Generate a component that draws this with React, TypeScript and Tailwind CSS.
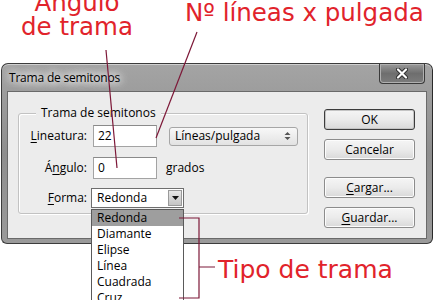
import type { ReactNode } from 'react'

const listItems = ['Redonda', 'Diamante', 'Elipse', 'Línea', 'Cuadrada', 'Cruz']

function DlgButton({ children, primary }: { children: ReactNode; primary?: boolean }) {
  return (
    <div
      className={`flex h-[21px] w-[91px] items-center justify-center rounded-[3px] border bg-linear-to-b from-[#f5f5f5] via-[#ebebeb] to-[#d9d9d9] text-[12px] text-black ${
        primary ? 'border-[#3c3c3c] shadow-[inset_0_0_0_1px_#c4c4c4]' : 'border-[#8c8c8c] shadow-[inset_0_0_0_1px_#fcfcfc]'
      }`}
    >
      {children}
    </div>
  )
}

function CloseButton() {
  return (
    <div className="mr-[7px] ml-auto flex h-[20px] w-[46px] items-center justify-center self-start rounded-b-[4px] border border-t-0 border-[#3a3a3a] bg-linear-to-b from-[#9a9a9a] via-[#6e6e6e] to-[#7c7c7c] shadow-[inset_0_0_0_1px_#b0b0b0]">
      <svg width="14" height="11" viewBox="0 0 14 11">
        <path d="M3 1.5 L11 9.5 M11 1.5 L3 9.5" stroke="#2e2e2e" strokeWidth="4" strokeLinecap="round" />
        <path d="M3 1.5 L11 9.5 M11 1.5 L3 9.5" stroke="#ffffff" strokeWidth="2.2" strokeLinecap="round" />
      </svg>
    </div>
  )
}

export default function App() {
  return (
    <div className="relative h-[300px] w-[434px] overflow-hidden bg-white pt-[63px] pl-[1px] font-['Open_Sans',sans-serif]">
      {/* dialog window */}
      <div className="flex h-[181px] w-[432px] flex-col rounded-t-[7px] rounded-b-[6px] border border-[#3c3c3c] border-r-[#2a2a2a] bg-linear-to-b from-[#a4a4a4] via-[#8e8e8e] to-[#9a9a9a] shadow-[inset_0_1px_0_#d0d0d0]">
        <div className="flex h-[27px] items-center pl-[7px]">
          <span className="text-[12px] tracking-[-0.2px] text-black [text-shadow:0_0_8px_#fff,0_0_8px_#fff,0_0_12px_#fff]">
            Trama de semitonos
          </span>
          <CloseButton />
        </div>

        <div className="px-[5px]">
          {/* client area */}
          <div className="flex h-[148px] items-start border border-[#6a6a6a] bg-[#ececec] pl-[10px] text-[12px] text-black">
            {/* group box */}
            <div className="relative mt-[21px] h-[101px] w-[290px] rounded-[3px] border border-[#c2c2c2] shadow-[inset_1px_1px_0_#fff,1px_1px_0_#fff]">
              <span className="absolute top-[-10px] left-[17px] bg-[#ececec] px-[5px] leading-[18px]">Trama de semitonos</span>

              <div className="flex flex-col pt-[11px]">
                <div className="flex h-[22px] items-center">
                  <span className="w-[68px] text-right">
                    <span className="underline underline-offset-2">L</span>ineatura:
                  </span>
                  <div className="ml-[6px] flex h-[22px] w-[64px] items-center border border-[#a3a3a3] border-t-[#8a8a8a] bg-white pl-[4px]">22</div>
                  <div className="ml-[12px] flex h-[19px] w-[129px] items-center justify-between rounded-[3px] border border-[#a6a6a6] bg-linear-to-b from-[#f8f8f8] to-[#e2e2e2] pr-[6px] pl-[5px]">
                    <span>Líneas/pulgada</span>
                    <svg width="7" height="10" viewBox="0 0 7 10">
                      <path d="M0.5 4 L3.5 1 L6.5 4 Z M0.5 6 L3.5 9 L6.5 6 Z" fill="#555" />
                    </svg>
                  </div>
                </div>

                <div className="mt-[10px] flex h-[22px] items-center">
                  <span className="w-[68px] text-right">
                    Á<span className="underline underline-offset-2">n</span>gulo:
                  </span>
                  <div className="ml-[6px] flex h-[22px] w-[64px] items-center border border-[#a3a3a3] border-t-[#8a8a8a] bg-white pl-[4px]">0</div>
                  <span className="ml-[9px]">grados</span>
                </div>

                <div className="mt-[9px] flex h-[20px] items-center">
                  <span className="w-[68px] text-right">
                    <span className="underline underline-offset-2">F</span>orma:
                  </span>
                  <div className="relative ml-[4px] flex h-[20px] w-[93px] items-center border border-[#6e6e6e] bg-white pl-[5px]">
                    <span>Redonda</span>
                    <div className="absolute top-[1px] right-[1px] flex h-[16px] w-[14px] items-center justify-center border border-[#9a9a9a] bg-linear-to-b from-[#e6e6e6] to-[#c4c4c4]">
                      <svg width="7" height="4" viewBox="0 0 7 4">
                        <path d="M0 0 H7 L3.5 4 Z" fill="#111" />
                      </svg>
                    </div>

                    {/* open list */}
                    <div className="absolute top-[20px] left-[-1px] z-10 w-[93px] border border-[#5a5a5a] bg-white">
                      {listItems.map((item, i) => (
                        <div key={item} className={`h-[16px] pl-[5px] leading-[16px] ${i === 0 ? 'bg-[#9e9e9e]' : ''}`}>
                          {item}
                        </div>
                      ))}
                    </div>
                  </div>
                </div>
              </div>
            </div>

            {/* buttons */}
            <div className="mt-[17px] ml-[16px] flex flex-col">
              <DlgButton primary>OK</DlgButton>
              <div className="mt-[9px]">
                <DlgButton>Cancelar</DlgButton>
              </div>
              <div className="mt-[17px]">
                <DlgButton>
                  <span className="underline underline-offset-2">C</span>argar...
                </DlgButton>
              </div>
              <div className="mt-[9px]">
                <DlgButton>
                  <span className="underline underline-offset-2">G</span>uardar...
                </DlgButton>
              </div>
            </div>
          </div>
        </div>
      </div>

      {/* annotations */}
      <div className="absolute top-[-9px] left-[-3px] w-[160px] text-center font-['DejaVu_Sans',sans-serif] text-[24.5px] leading-[24px] text-[#e1232b]">
        Ángulo
        <br />
        de trama
      </div>
      <div className="absolute top-[1px] left-[185px] font-['DejaVu_Sans',sans-serif] text-[24.5px] leading-[24px] whitespace-nowrap text-[#e1232b]">
        Nº líneas x pulgada
      </div>
      <div className="absolute top-[256px] left-[218px] font-['DejaVu_Sans',sans-serif] text-[25px] leading-[27px] whitespace-nowrap text-[#e1232b]">
        Tipo de trama
      </div>

      <svg className="pointer-events-none absolute top-0 left-0 z-20" width="434" height="300" viewBox="0 0 434 300">
        <g stroke="#7d1838" strokeWidth="1.2" fill="none">
          <line x1="106" y1="50" x2="117" y2="168" />
          <line x1="197" y1="32" x2="156" y2="138" />
          <path d="M179 218 H199 V298 H179 M199 267 H215" />
        </g>
      </svg>
    </div>
  )
}
